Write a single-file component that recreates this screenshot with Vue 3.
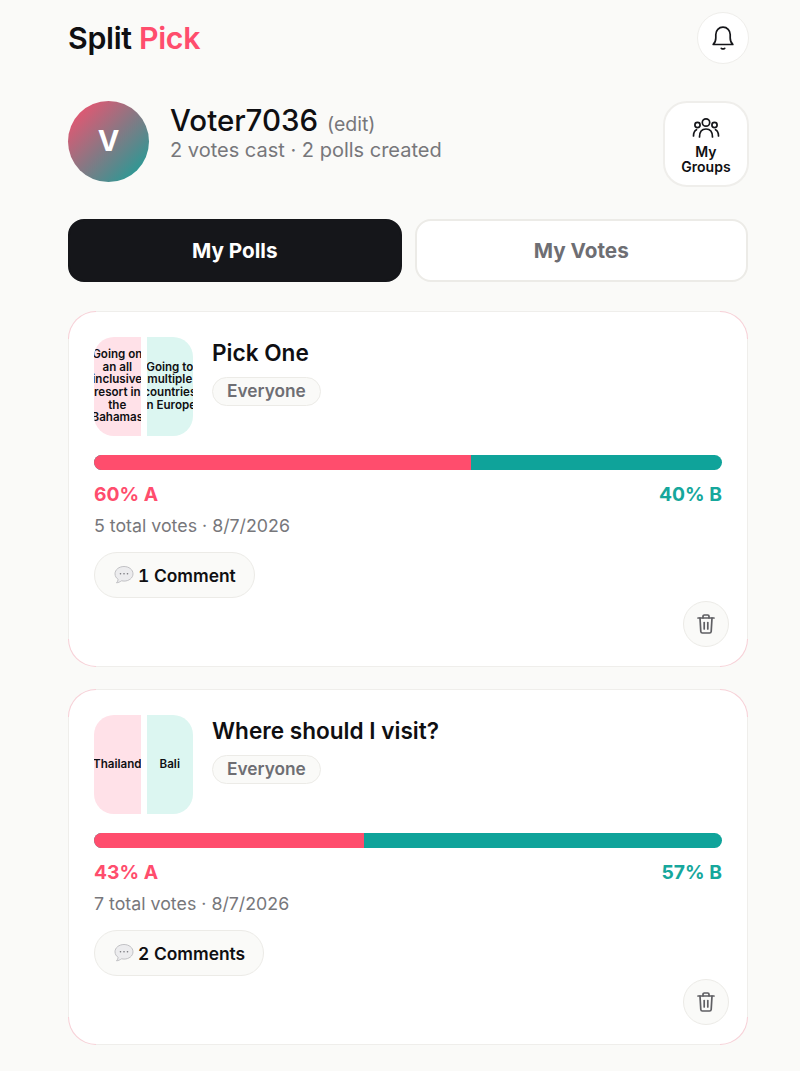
<template>
  <div class="page">
    <header class="top">
      <div class="logo">Split <span class="pink">Pick</span></div>
      <button class="bell">
        <svg width="26" height="26" viewBox="0 0 26 26" fill="none" stroke="#15161a" stroke-width="1.7" stroke-linecap="round" stroke-linejoin="round">
          <path d="M3.2 19.5h19.6c-1.9-1.7-2.6-3.6-2.600-6.400V9.600c0-4.200-3-7.400-7.200-7.400S5.800 5.400 5.800 9.600v3.500c0 2.800-.7 4.700-2.600 6.400Z" />
          <path d="M11.300 23.300c.9.700 2.500.7 3.400 0" />
        </svg>
      </button>
    </header>

    <section class="profile">
      <div class="avatar">V</div>
      <div class="who">
        <div class="name">Voter7036 <span class="edit">(edit)</span></div>
        <div class="stats">2 votes cast · 2 polls created</div>
      </div>
      <button class="groups">
        <svg width="28" height="24" viewBox="0 0 28 24" fill="none" stroke="#15161a" stroke-width="1.7" stroke-linecap="round">
          <circle cx="14" cy="5.500" r="3.700" />
          <circle cx="5.500" cy="8" r="2.600" />
          <circle cx="22.500" cy="8" r="2.600" />
          <path d="M7.500 20c0-5 2.500-8 6.500-8s6.500 3 6.500 8" />
          <path d="M1.500 19c0-3.200 1-5.300 3-6.300" />
          <path d="M26.500 19c0-3.200-1-5.300-3-6.300" />
        </svg>
        <span>My<br />Groups</span>
      </button>
    </section>

    <nav class="tabs">
      <button class="tab active">My Polls</button>
      <button class="tab">My Votes</button>
    </nav>

    <article v-for="poll in polls" :key="poll.title" class="card">
      <div class="head">
        <div class="thumb">
          <div class="pane a"><span>{{ poll.a }}</span></div>
          <div class="pane b"><span>{{ poll.b }}</span></div>
        </div>
        <div class="info">
          <h3>{{ poll.title }}</h3>
          <span class="tag">Everyone</span>
        </div>
      </div>
      <div class="bar">
        <div class="fill" :style="{ width: poll.pctA + '%' }"></div>
      </div>
      <div class="pcts">
        <span class="pink">{{ poll.pctA }}% A</span>
        <span class="teal">{{ 100 - poll.pctA }}% B</span>
      </div>
      <div class="meta">{{ poll.votes }} total votes · 8/7/2026</div>
      <button class="comments">
        <svg width="20" height="20" viewBox="0 0 20 20">
          <path d="M10 1.500c-5 0-9 3.200-9 7.300 0 2.300 1.200 4.300 3.200 5.600-.2 1.300-.9 2.500-1.700 3.400 1.800-.1 3.700-1 5-2 .8.200 1.600.3 2.500.3 5 0 9-3.200 9-7.300S15 1.500 10 1.500Z" fill="#ececee" stroke="#b4b4b8" stroke-width=".8" />
          <circle cx="6.500" cy="8.800" r=".8" fill="#77777b" />
          <circle cx="10" cy="8.800" r=".8" fill="#77777b" />
          <circle cx="13.500" cy="8.800" r=".8" fill="#77777b" />
        </svg>
        {{ poll.comments }}
      </button>
      <button class="trash">
        <svg width="20" height="22" viewBox="0 0 20 22" fill="none" stroke="#5f5f63" stroke-width="1.700" stroke-linecap="round" stroke-linejoin="round">
          <path d="M2 5h16" />
          <path d="M7 4.800V3.300c0-.8.600-1.300 1.300-1.300h3.400c.7 0 1.300.5 1.300 1.300v1.500" />
          <path d="M4 5l.8 13.500c.1 1 .8 1.500 1.600 1.500h7.200c.8 0 1.500-.5 1.600-1.500L16 5" />
          <path d="M8.200 9.500v6.500" />
          <path d="M11.800 9.500v6.500" />
        </svg>
      </button>
    </article>
  </div>
</template>

<script setup>
const polls = [
  {
    title: 'Pick One',
    a: 'Going on an all inclusive resort in the Bahamas',
    b: 'Going to multiple countries in Europe',
    pctA: 60,
    votes: 5,
    comments: '1 Comment',
  },
  {
    title: 'Where should I visit?',
    a: 'Thailand',
    b: 'Bali',
    pctA: 43,
    votes: 7,
    comments: '2 Comments',
  },
]
</script>

<style>
body {
  background: #fafaf8;
}
</style>

<style scoped>
.page {
  width: 681px;
  margin-left: 68px;
  padding-top: 12px;
  font-family: Inter, "Liberation Sans", sans-serif;
  color: #0f0f12;
}

button {
  font-family: inherit;
  color: inherit;
  cursor: pointer;
}

.top {
  display: flex;
  align-items: center;
  justify-content: space-between;
  height: 52px;
}

.logo {
  font-size: 30.300px;
  font-weight: 600;
  letter-spacing: -0.3px;
}

.pink {
  color: #ff4d6d;
}

.teal {
  color: #16a79c;
}

.bell {
  display: flex;
  align-items: center;
  justify-content: center;
  width: 52px;
  height: 52px;
  padding: 0;
  background: #fff;
  border: 1.5px solid #efeeeb;
  border-radius: 50%;
}

.profile {
  display: flex;
  align-items: flex-start;
  margin-top: 37px;
}

.avatar {
  display: flex;
  align-items: center;
  justify-content: center;
  width: 81px;
  height: 81px;
  padding-bottom: 2px;
  box-sizing: border-box;
  border-radius: 50%;
  background: linear-gradient(135deg, #ff4d6d, #0fa39a);
  color: #fff;
  font-size: 29px;
  font-weight: 700;
}

.who {
  flex: 1;
  margin-left: 21px;
  padding-top: 4px;
}

.name {
  font-size: 29.500px;
  font-weight: 500;
  line-height: 30px;
}

.edit {
  margin-left: 1px;
  font-size: 19.500px;
  font-weight: 400;
  color: #77777b;
}

.stats {
  margin-top: -2px;
  font-size: 20px;
  line-height: 26px;
  color: #77777b;
}

.groups {
  display: flex;
  flex-direction: column;
  align-items: center;
  gap: 2.500px;
  width: 86px;
  height: 86px;
  padding: 14px 0 0;
  background: #fff;
  border: 2px solid #efeeeb;
  border-radius: 24px;
  font-size: 14px;
  font-weight: 600;
  line-height: 15.500px;
}

.groups svg {
  flex: none;
}

.tabs {
  display: grid;
  grid-template-columns: 1fr 1fr;
  gap: 13px;
  margin: 32px 1px 0 0;
}

.tab {
  height: 63px;
  padding: 0;
  background: #fff;
  border: 2.500px solid #ecebe7;
  border-radius: 16px;
  font-size: 20.700px;
  font-weight: 700;
  color: #6e6e73;
}

.tab.active {
  background: #15161a;
  border-color: #15161a;
  color: #fff;
}

.card {
  position: relative;
  height: 356px;
  box-sizing: border-box;
  margin: 29px 1px 0 0;
  padding: 24.500px 25px 0;
  border: 1.500px solid transparent;
  border-radius: 28px;
  background:
    linear-gradient(#fff, #fff) padding-box,
    linear-gradient(#efeeeb, #efeeeb) 28px 0 / calc(100% - 56px) 100% no-repeat border-box,
    linear-gradient(#efeeeb, #efeeeb) 0 28px / 100% calc(100% - 56px) no-repeat border-box,
    #f7d0d7 border-box;
}

.card + .card {
  margin-top: 22px;
}

.head {
  display: flex;
  gap: 19px;
}

.thumb {
  display: grid;
  grid-template-columns: 1fr 1fr;
  gap: 6px;
  width: 99px;
  height: 99px;
  flex: none;
  border-radius: 20px;
  overflow: hidden;
}

.pane {
  display: flex;
  align-items: center;
  justify-content: center;
  overflow: hidden;
  text-align: center;
  font-size: 11.600px;
  font-weight: 600;
  line-height: 12.650px;
}

.pane.a {
  background: #ffe1e8;
}

.pane.b {
  background: #dcf6f1;
}

.info {
  padding-top: 1px;
}

h3 {
  margin: 0 0 9px;
  font-size: 22.600px;
  font-weight: 600;
  line-height: 30px;
}

.tag {
  display: inline-block;
  height: 29px;
  box-sizing: border-box;
  padding: 0 14px;
  background: #fafaf8;
  border: 1.500px solid #ecebe7;
  border-radius: 15px;
  font-size: 17.300px;
  font-weight: 600;
  line-height: 26px;
  color: #6e6e73;
}

.bar {
  height: 15px;
  margin-top: 19.500px;
  border-radius: 8px;
  background: #0fa39a;
  overflow: hidden;
}

.fill {
  height: 100%;
  background: #ff4d6d;
}

.pcts {
  display: flex;
  justify-content: space-between;
  margin-top: 13px;
  font-size: 19.300px;
  font-weight: 700;
  line-height: 22px;
}

.meta {
  margin-top: 9.500px;
  font-size: 17.800px;
  line-height: 22px;
  color: #77777b;
}

.comments {
  display: flex;
  align-items: center;
  gap: 4px;
  height: 46px;
  margin-top: 15.500px;
  padding: 0 18px 0 19px;
  background: #fafaf8;
  border: 1.500px solid #ecebe7;
  border-radius: 23px;
  font-size: 17.400px;
  font-weight: 600;
  font-variant-numeric: tabular-nums;
}

.trash {
  position: absolute;
  right: 18px;
  bottom: 19.500px;
  display: flex;
  align-items: center;
  justify-content: center;
  width: 46px;
  height: 46px;
  padding: 0;
  background: #fafaf8;
  border: 1.500px solid #ecebe7;
  border-radius: 50%;
}
</style>
